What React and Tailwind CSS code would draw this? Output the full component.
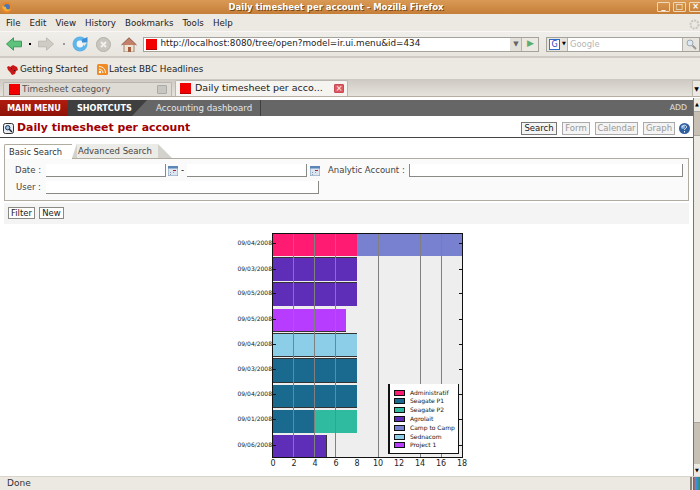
import React from "react";

const menus = ["File", "Edit", "View", "History", "Bookmarks", "Tools", "Help"];

const Favicon = ({ className = "" }) => (
  <div className={"w-[11px] h-[11px] shrink-0 bg-[#f00000] border-b border-[#b00000] " + className} />
);

const ToolDot = ({ className = "" }) => <div className={"w-[2px] h-[2px] shrink-0 " + className} />;

const BackIcon = ({ fill = "#5cc27c", stroke = "#3d9a5c", flip = false }) => (
  <svg width="16" height="14" viewBox="0 0 16 14" className={"shrink-0 " + (flip ? "-scale-x-100" : "")}>
    <path d="M.5 7 7.5.8v3.4h8v5.6h-8v3.4z" fill={fill} stroke={stroke} />
  </svg>
);

const ReloadIcon = () => (
  <svg width="16" height="16" viewBox="0 0 16 16" className="shrink-0">
    <circle cx="8" cy="8" r="7.5" fill="#5fb4ea" />
    <circle cx="8" cy="8" r="3.4" fill="#f2f6fa" />
    <path d="M8.500 5.500 16 5 12.500 10z" fill="#ece9e3" />
    <path d="M10 3.500 15.500 1v5.500H10z" fill="#3a90d8" />
  </svg>
);

const StopIcon = () => (
  <svg width="15" height="15" viewBox="0 0 15 15" className="shrink-0">
    <circle cx="7.500" cy="7.500" r="7" fill="#c9c6c0" stroke="#b3b0aa" />
    <path d="M5 5l5 5M10 5l-5 5" stroke="#f1efeb" strokeWidth="2" />
  </svg>
);

const HomeIcon = () => (
  <svg width="16" height="15" viewBox="0 0 16 15" className="shrink-0">
    <path d="M3 7h10v8H3z" fill="#efe3d2" stroke="#a08670" />
    <path d="M.5 8 8 .8 15.500 8" fill="#c3816a" stroke="#8f5a48" />
    <path d="M7 10h3v5H7z" fill="#a35c3c" />
  </svg>
);

const CalendarIcon = () => (
  <svg width="10" height="10" viewBox="0 0 10 10" className="shrink-0">
    <rect width="10" height="10" fill="#dbe6f0" stroke="#7d97b6" />
    <rect width="10" height="2.500" fill="#5b86b8" />
    <path d="M5 4h3v1H5z" fill="#b02030" />
    <path d="M2 6h1v1H2zM5 6h1v1H5zM2 8h1v1H2z" fill="#8d9cae" />
  </svg>
);

const SearchPageIcon = () => (
  <svg width="11" height="11" viewBox="0 0 11 11" className="shrink-0">
    <rect x=".5" y=".5" width="10" height="10" rx="2" fill="#e8eef4" stroke="#333" />
    <circle cx="4.700" cy="4.700" r="2.200" fill="#9cc3e8" stroke="#234" />
    <path d="M6.300 6.300 9 9" stroke="#223" strokeWidth="1.500" />
  </svg>
);

const HelpIcon = () => (
  <svg width="11" height="11" viewBox="0 0 11 11" className="shrink-0">
    <circle cx="5.500" cy="5.500" r="5.500" fill="#2f5f9e" />
    <circle cx="4" cy="4" r="2" fill="#8db3de" />
    <path d="M3.500 4c0-2.500 4-2.500 4 0 0 1.500-2 1.500-2 3M5.500 8v1.500" stroke="#e8eef6" fill="none" />
  </svg>
);

function TitleBar() {
  return (
    <div className="h-[14px] shrink-0 flex items-center bg-gradient-to-b from-[#d99a55] to-[#c57e38] pl-px overflow-hidden">
      <svg width="11" height="11" viewBox="0 0 11 11" className="shrink-0">
        <circle cx="5.500" cy="5.500" r="5.500" fill="#e8862a" />
        <circle cx="6" cy="5" r="3" fill="#4a76b8" />
        <path d="M1 4c1 5 6 7 9 3-2 1-5 1-5-2z" fill="#f2b63a" />
      </svg>
      <div className="flex-1 text-center text-[8.5px] font-bold text-white leading-[14px] pl-[3px] [text-shadow:1px_1px_0_#7a4a18]">
        Daily timesheet per account - Mozilla Firefox
      </div>
      <div className="flex gap-[3px] shrink-0 mr-[-2px]">
        {["_", "□", "×"].map((c) => (
          <div key={c} className="w-[13px] h-[10px] border border-[#f0d8b8] rounded-[1px] text-white text-[8px] leading-[8px] font-bold text-center">
            {c}
          </div>
        ))}
      </div>
    </div>
  );
}

function MenuBar() {
  return (
    <div className="h-[17px] shrink-0 flex items-center bg-[#ece9e3] text-[8.7px] text-[#222] pl-[6px] pr-px pt-[3px]">
      <div className="flex gap-[9px] flex-1">
        {menus.map((m) => (
          <span key={m}>{m}</span>
        ))}
      </div>
      <svg width="11" height="11" viewBox="0 0 11 11" className="shrink-0 mr-[-1px]">
        <circle cx="5.500" cy="5.500" r="4" fill="none" stroke="#c8c6c0" strokeWidth="2" strokeDasharray="2 1" />
      </svg>
    </div>
  );
}

function NavBar() {
  return (
    <div className="h-[27px] shrink-0 flex items-center bg-gradient-to-b from-[#f0eeea] to-[#e8e5df] border-t border-[#f8f7f5] border-b-2 border-b-[#cfcbc4] pl-[6px]">
      <BackIcon />
      <ToolDot className="bg-black ml-[7px] mr-[7px]" />
      <BackIcon fill="#cfccc6" stroke="#bdbab4" flip />
      <ToolDot className="bg-[#999] ml-[9px] mr-[7px]" />
      <ReloadIcon />
      <div className="w-[9px]" />
      <StopIcon />
      <div className="w-[10px]" />
      <HomeIcon />
      <div className="w-[7px]" />
      <div className="w-[396px] h-[15px] flex items-center bg-white border border-[#a5a29c] shrink-0">
        <Favicon className="ml-[2px] mr-[3px]" />
        <span className="flex-1 text-[8.8px] text-[#222] whitespace-nowrap overflow-hidden">http://localhost:8080/tree/open?model=ir.ui.menu&amp;id=434</span>
        <div className="w-[12px] h-full bg-[#e3e0da] flex items-center justify-center text-[7px] text-[#666] border-r border-[#b5b2ac]">▼</div>
        <div className="w-[16px] h-full bg-[#ece9e3] flex items-center justify-center text-[9px] text-[#5cae6c]">▶</div>
      </div>
      <div className="w-[7px]" />
      <div className="w-[154px] h-[15px] flex items-center bg-white border border-[#a5a29c] shrink-0">
        <div className="w-[21px] h-full bg-[#e8e5df] flex items-center pl-[2px] border-r border-[#b5b2ac]">
          <div className="w-[11px] h-[11px] bg-white border border-[#2a6ac8] border-l-[#2a9a3a] text-[8px] leading-[9px] text-center text-[#2040c0]">G</div>
          <span className="text-[5px] ml-[2px] text-black">▼</span>
        </div>
        <span className="flex-1 pl-[2px] text-[8.4px] text-[#b5b5b5]">Google</span>
        <div className="w-[17px] h-full bg-[#e8e5df] border-l border-[#b5b2ac] flex items-center justify-center">
          <svg width="11" height="11" viewBox="0 0 11 11">
            <circle cx="4" cy="4" r="3" fill="#dfe8f0" stroke="#9aa8b6" />
            <path d="M6.500 6.500 10 10" stroke="#9a9a9a" strokeWidth="2" />
          </svg>
        </div>
      </div>
    </div>
  );
}

function BookmarksBar() {
  return (
    <div className="h-[21px] shrink-0 flex items-center bg-[#ece9e3] text-[8.8px] text-[#222] pl-[7px] pt-[2px]">
      <svg width="11" height="10" viewBox="0 0 11 10" className="shrink-0 mr-[2px]">
        <path d="M0 2 2 1l1 1 3-2 4 2 1 3-2 1-1 3-3 1-2-3-2-2z" fill="#c81818" />
        <path d="M4 3h1v1H4zM7 5h1v1H7z" fill="#300" />
      </svg>
      <span>Getting Started</span>
      <svg width="11" height="11" viewBox="0 0 11 11" className="shrink-0 ml-[9px] mr-px">
        <rect width="11" height="11" rx="1.500" fill="#f08a24" />
        <circle cx="3" cy="8" r="1.200" fill="#fff" />
        <path d="M2 5c2 0 4 2 4 4M2 2.500c4 0 6.500 3 6.500 6.500" stroke="#fff" fill="none" />
      </svg>
      <span>Latest BBC Headlines</span>
    </div>
  );
}

function TabsBar() {
  return (
    <div className="h-[18px] shrink-0 flex items-end bg-gradient-to-b from-[#cdc9c2] to-[#e6e3dd] border-b border-[#b5ae9f] pl-[3px] text-[9.5px]">
      <div className="w-[169px] h-[14px] mr-[3px] flex items-center bg-[#dedbd5] border border-b-0 border-[#bab7b0] rounded-t-[2px] pl-[5px] pr-[4px] text-[#555]">
        <Favicon className="mr-[2px]" />
        <span className="flex-1 whitespace-nowrap overflow-hidden text-[8.9px]">Timesheet category</span>
        <div className="w-[10px] h-[9px] bg-[#c8c6c0] border border-[#aaa] rounded-[1px]" />
      </div>
      <div className="w-[173px] h-[16px] flex items-center bg-[#f5f4f1] border border-b-0 border-[#bab7b0] rounded-t-[2px] pl-[4px] pr-[3px] text-[#222]">
        <Favicon className="mr-[4px]" />
        <span className="flex-1 whitespace-nowrap overflow-hidden">Daily timesheet per acco...</span>
        <div className="w-[10px] h-[9px] bg-[#e05a64] border border-[#c84a54] rounded-[1px] text-white text-[8px] leading-[7px] text-center">×</div>
      </div>
      <div className="flex-1" />
      <div className="w-[8px] h-[16px] bg-[#ece9e3] border-l border-t border-[#bab7b0] flex items-center justify-center text-[6px] text-black">▼</div>
    </div>
  );
}

function AppMenu() {
  return (
    <div className="h-[16px] shrink-0 flex items-stretch bg-[#666] text-[8.6px] leading-[16px] text-white mt-[3px]">
      <div className="w-[68px] bg-gradient-to-b from-[#b01c10] to-[#8e1208] text-center font-bold text-[8.1px]">MAIN MENU</div>
      <div className="w-[64px] bg-[#3f3f3f] pl-[9px] font-bold text-[8.1px] whitespace-nowrap">SHORTCUTS</div>
      <div className="w-0 h-0 border-t-[16px] border-t-[#3f3f3f] border-r-[15px] border-r-transparent" />
      <div className="w-[114px] pl-[9px] border-r border-[#3f3f3f] text-[#e6e6e6] whitespace-nowrap">Accounting dashboard</div>
      <div className="flex-1" />
      <div className="pr-[6px] text-[#e6e6e6] text-[7.8px]">ADD</div>
    </div>
  );
}

function ActionButton({ label, width, active }) {
  return (
    <div
      className={
        "h-[13px] bg-[#f4f4f4] border text-[8.5px] leading-[11px] text-center shrink-0 " +
        width +
        (active ? " border-[#777] text-[#222]" : " border-[#aaa] text-[#999]")
      }
    >
      {label}
    </div>
  );
}

function TitleRow() {
  return (
    <div className="h-[22px] shrink-0 flex items-center border-b border-[#444] pl-[3px] pr-[3px] pt-[4px]">
      <SearchPageIcon />
      <h1 className="ml-[3px] text-[10.9px] font-bold text-[#a00000] whitespace-nowrap flex-1">Daily timesheet per account</h1>
      <div className="flex items-center gap-[5px]">
        <ActionButton label="Search" width="w-[36px]" active />
        <ActionButton label="Form" width="w-[28px]" />
        <ActionButton label="Calendar" width="w-[43px]" />
        <ActionButton label="Graph" width="w-[32px]" />
      </div>
      <div className="w-[4px]" />
      <HelpIcon />
    </div>
  );
}

function SearchTabs() {
  return (
    <div className="h-[15px] mt-[5px] flex items-end text-[8.5px] text-[#444] leading-[14px]">
      <div className="w-[68px] h-[15px] relative bg-white border-l border-t border-[#b0ada0] pl-[4px] text-[#333] z-10 mb-[-1px] rounded-tl-[2px] text-[8.3px]">Basic Search</div>
      <div className="w-0 h-0 border-b-[15px] border-b-[#d4d2cc] border-r-[5px] border-r-transparent -scale-x-100" />
      <div className="w-[81px] h-[14px] bg-[#ebebe8] pl-[1px] whitespace-nowrap">Advanced Search</div>
      <div className="w-0 h-0 border-b-[14px] border-b-[#d4d2cc] border-r-[14px] border-r-transparent" />
    </div>
  );
}

function Field({ width }) {
  return <div className={"h-[13px] bg-white border-r border-b border-[#8a8a84] shrink-0 " + width} />;
}

function SearchBox() {
  return (
    <div className="h-[43px] border border-[#b0ada0] bg-[#fafafa] pt-[5px] text-[8.5px] text-[#444] leading-[13px]">
      <div className="flex items-center">
        <span className="w-[36px] text-right shrink-0 whitespace-nowrap">Date :</span>
        <div className="w-[5px]" />
        <Field width="w-[120px]" />
        <div className="w-[2px]" />
        <CalendarIcon />
        <span className="w-[9px] text-center text-black">-</span>
        <Field width="w-[120px]" />
        <div className="w-[3px]" />
        <CalendarIcon />
        <span className="ml-[8px] w-[81px] shrink-0 whitespace-nowrap">Analytic Account :</span>
        <Field width="w-[274px] border-l" />
      </div>
      <div className="flex items-center mt-[4px]">
        <span className="w-[36px] text-right shrink-0">User :</span>
        <div className="w-[5px]" />
        <Field width="w-[273px]" />
      </div>
    </div>
  );
}

function FilterBar() {
  return (
    <div className="h-[21px] mt-[2px] flex items-center gap-[4px] bg-[#f4f4f4] pl-[4px] pb-[2px] text-[8.5px] text-[#222]">
      <div className="w-[27px] h-[12px] bg-white border border-[#8a8a84] leading-[10px] text-center">Filter</div>
      <div className="w-[25px] h-[12px] bg-white border border-[#8a8a84] leading-[10px] text-center">New</div>
    </div>
  );
}

const rowTicks = [242, 268, 292, 318, 343, 368, 393, 418, 444];
const rowLabels = ["09/04/2008", "09/03/2008", "09/05/2008", "09/05/2008", "09/04/2008", "09/03/2008", "09/04/2008", "09/01/2008", "09/06/2008"];
const bars = [
  { x: 273, y: 232, w: 84, h: 23, fill: "#ff1a72" },
  { x: 357, y: 232, w: 105, h: 23, fill: "#7880d0" },
  { x: 273, y: 257, w: 84, h: 23, fill: "#5f2eb8", line: true },
  { x: 273, y: 282, w: 84, h: 23, fill: "#5f2eb8", line: true },
  { x: 273, y: 308, w: 73, h: 23, fill: "#b83cff", bottom: true },
  { x: 273, y: 333, w: 84, h: 23, fill: "#8ccde8", line: true, bottom: true },
  { x: 273, y: 358, w: 84, h: 24, fill: "#1a6a90", line: true, bottom: true },
  { x: 273, y: 384, w: 84, h: 23, fill: "#1a6a90", bottom: true },
  { x: 273, y: 409, w: 42, h: 23, fill: "#1a6a90" },
  { x: 315, y: 409, w: 42, h: 23, fill: "#2fbba0" },
  { x: 273, y: 434, w: 53, h: 22, fill: "#5f2eb8", right: true },
];
const legend = [
  { label: "Administratif", y: 389, fill: "#ff1a72" },
  { label: "Seagate P1", y: 397, fill: "#1a6a90" },
  { label: "Seagate P2", y: 406, fill: "#2fbba0" },
  { label: "Agrolait", y: 415, fill: "#5f2eb8" },
  { label: "Camp to Camp", y: 424, fill: "#7880d0" },
  { label: "Sednacom", y: 433, fill: "#8ccde8" },
  { label: "Project 1", y: 441, fill: "#b83cff" },
];
const xTicks = [0, 2, 4, 6, 8, 10, 12, 14, 16, 18];

function Chart() {
  return (
    <svg width="247" height="240" viewBox="223 226 247 240" className="block mx-auto mt-[3px] shrink-0" fontFamily="'DejaVu Sans', sans-serif">
      <rect x="273" y="232" width="189" height="224" fill="#eeeeee" />
      {bars.map((b, i) => (
        <g key={i}>
          <rect x={b.x} y={b.y} width={b.w} height={b.h} fill={b.fill} />
          {b.line && <rect x={b.x} y={b.y - 1} width={b.w} height="1" fill="#333" />}
          {b.bottom && <rect x={b.x} y={b.y + b.h - 1} width={b.w} height="1" fill="#333" />}
          {b.right && <rect x={b.x + b.w} y={b.y} width="1" height={b.h} fill="#333" />}
        </g>
      ))}
      {[293, 314, 335, 378, 420, 441].map((x) => (
        <rect key={x} x={x} y="232" width="1" height="224" fill="#808080" />
      ))}
      <rect x="272" y="232" width="191" height="1" fill="#111" />
      <rect x="272" y="456" width="191" height="1" fill="#111" />
      <rect x="272" y="232" width="1" height="225" fill="#111" />
      <rect x="462" y="232" width="1" height="225" fill="#111" />
      {rowTicks.map((y, i) => (
        <g key={y}>
          <rect x="273" y={y} width="3" height="1" fill="#111" />
          <rect x="459" y={y} width="3" height="1" fill="#111" />
          <text x="272" y={y + 2} textAnchor="end" fontSize="6" fill="#222">
            {rowLabels[i]}
          </text>
        </g>
      ))}
      {xTicks.map((t, i) => (
        <text key={t} x={273 + i * 21} y="465" textAnchor="middle" fontSize="8" fill="#222">
          {t}
        </text>
      ))}
      <rect x="388" y="383" width="71" height="70" fill="#111" />
      <rect x="390" y="383" width="68" height="69" fill="#fff" />
      {legend.map((l) => (
        <g key={l.label}>
          <rect x="394.500" y={l.y + 0.5} width="10" height="5" fill={l.fill} stroke="#111" />
          <text x="410" y={l.y + 5} fontSize="6" fill="#111">
            {l.label}
          </text>
        </g>
      ))}
    </svg>
  );
}

function Scrollbar() {
  return (
    <div className="w-[7px] shrink-0 flex flex-col border-l border-[#7a756c] bg-[#c8c0b4] mt-[1px]">
      <div className="h-[14px] bg-[#ece9e3] text-[5px] leading-[12px] text-center border-b border-[#aaa]">▲</div>
      <div className="h-[23px]" />
      <div className="h-[288px] bg-[#ece9e3] border-y border-[#aaa69c]" />
      <div className="flex-1" />
      <div className="h-[12px] bg-[#ece9e3] text-[5px] leading-[12px] text-center">▼</div>
    </div>
  );
}

export default function App() {
  return (
    <div className="w-[700px] h-[490px] flex flex-col overflow-hidden bg-white font-['DejaVu_Sans',sans-serif]">
      <TitleBar />
      <MenuBar />
      <NavBar />
      <BookmarksBar />
      <TabsBar />
      <div className="flex-1 flex min-h-0">
        <div className="flex-1 min-w-0 flex flex-col overflow-hidden">
          <AppMenu />
          <TitleRow />
          <div className="px-[4px] flex flex-col">
            <SearchTabs />
            <SearchBox />
            <FilterBar />
          </div>
          <Chart />
        </div>
        <Scrollbar />
      </div>
      <div className="h-[14px] shrink-0 flex items-center bg-[#ece9e3] border-t border-[#d8d4cc] pl-[7px] text-[9px] text-[#333]">
        <span className="flex-1">Done</span>
        <div className="w-[2px] h-full bg-[#8a857c] mr-[1px]" />
        <div className="w-[7px] h-full bg-gradient-to-r from-[#c03020] via-[#3a90d8] to-[#3a8a50]" />
      </div>
    </div>
  );
}
